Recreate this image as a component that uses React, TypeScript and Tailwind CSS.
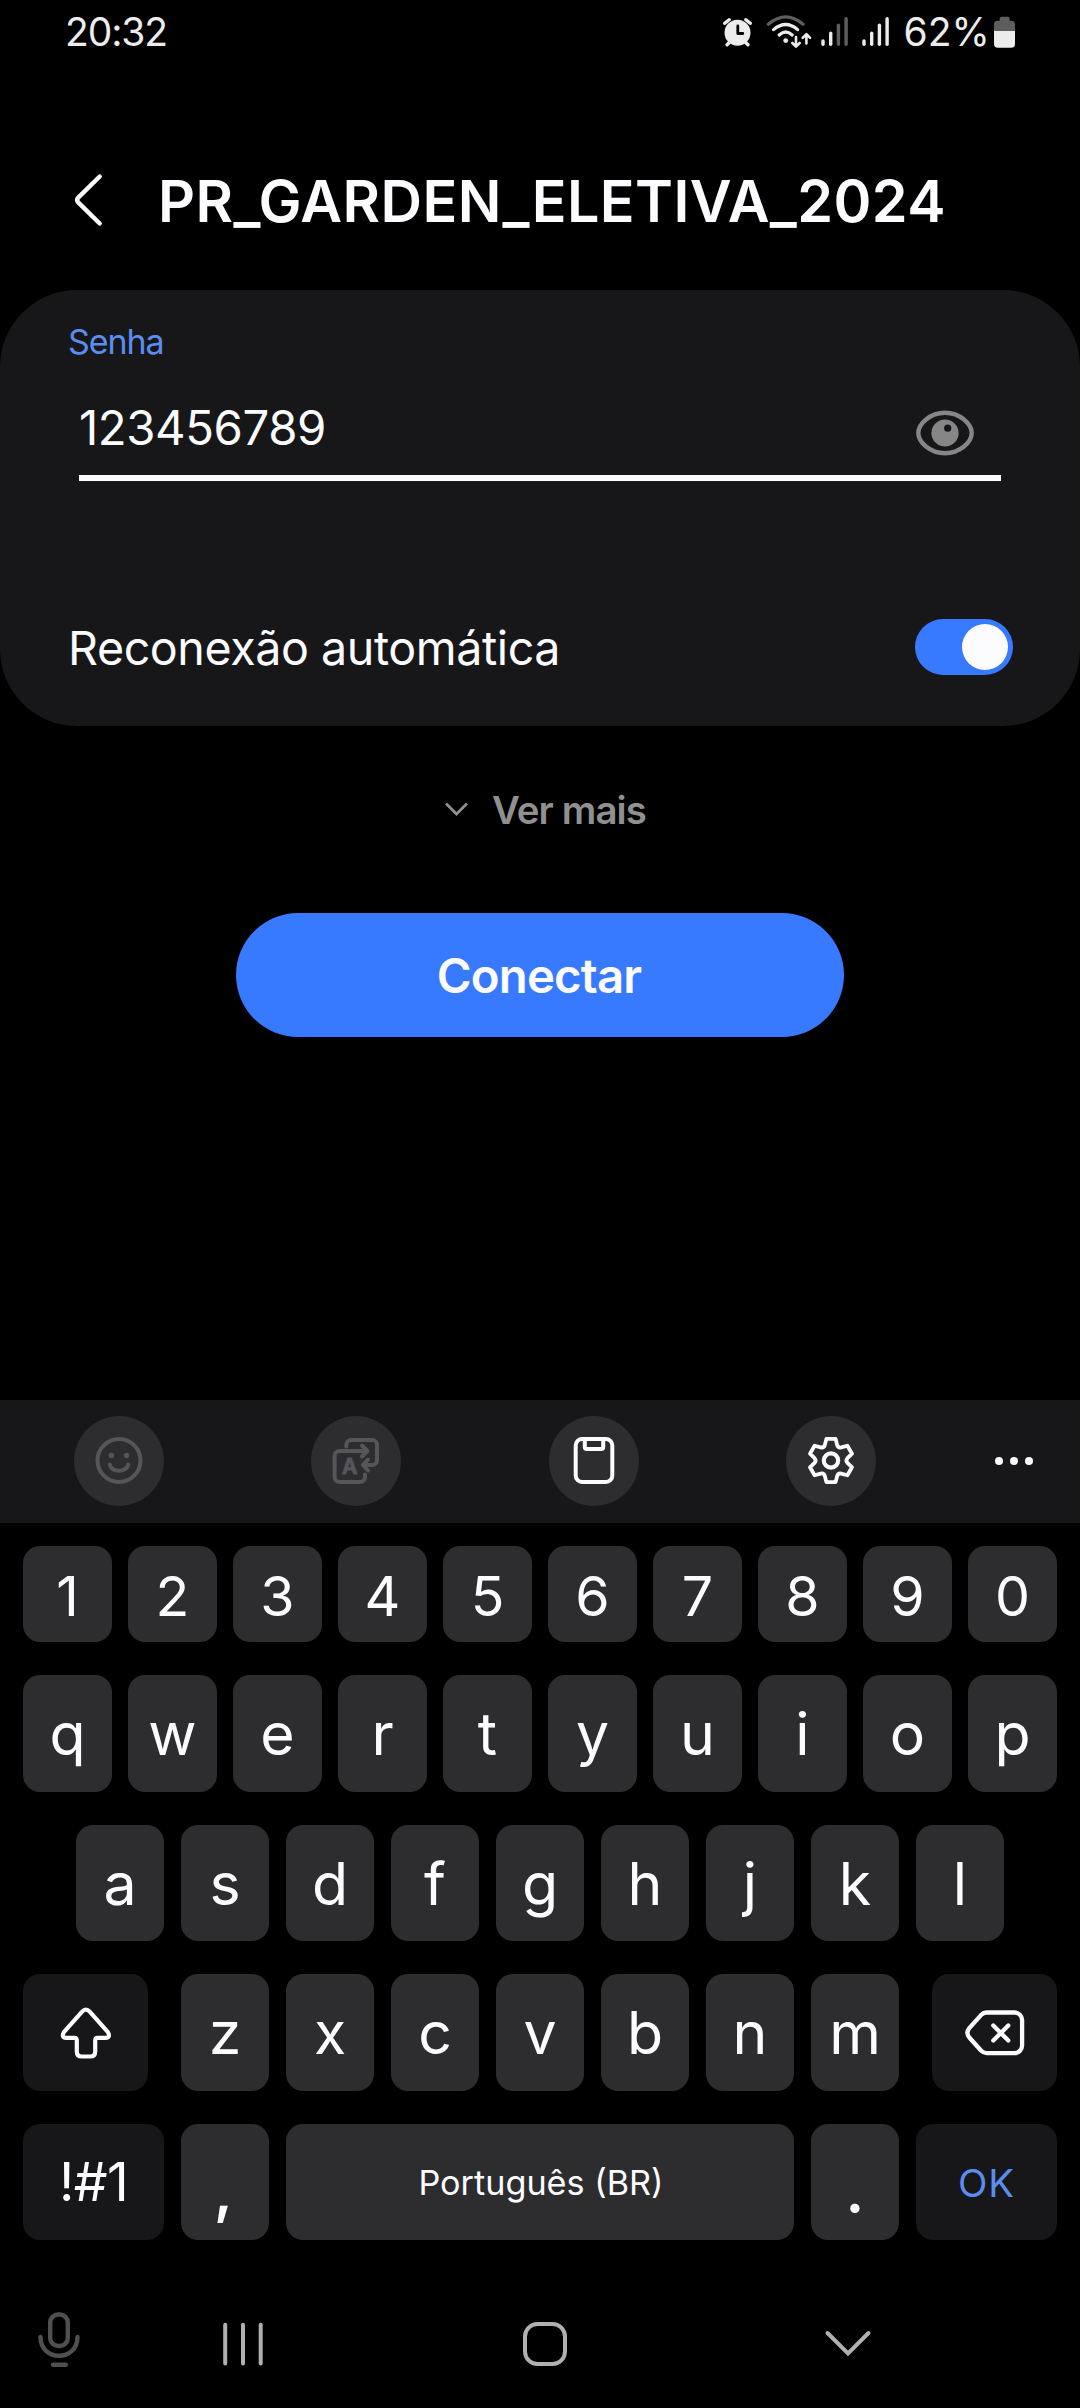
import type { ReactNode } from "react";

const digits = "1234567890".split("");
const topRow = "qwertyuiop".split("");
const homeRow = "asdfghjkl".split("");
const bottomRow = "zxcvbnm".split("");

/* Six-tooth gear outline centred on the origin. */
function gearPath() {
  const rot = (x: number, y: number, k: number) => {
    const a = (Math.PI / 3) * k;
    return `${(x * Math.cos(a) - y * Math.sin(a)).toFixed(2)} ${(x * Math.sin(a) + y * Math.cos(a)).toFixed(2)}`;
  };
  let d = `M${rot(-6.2, -15.4, 0)}`;
  for (let k = 0; k < 6; k++) {
    d += `L${rot(-4.6, -21.6, k)}L${rot(4.6, -21.6, k)}L${rot(6.2, -15.4, k)}Q${rot(7.2, -12.4, k)} ${rot(-6.2, -15.4, k + 1)}`;
  }
  return d + "Z";
}

function AlarmIcon() {
  return (
    <svg className="h-8 w-[30px]" viewBox="723 17 30 32" fill="none">
      <circle cx="738.5" cy="33.7" r="13" fill="#ececec" />
      <path d="M725.8 24.3l4.3-3.6M751.2 24.3l-4.3-3.6M730.3 43.5l-2.2 2.2M746.7 43.5l2.2 2.2" stroke="#ececec" strokeWidth="3.4" strokeLinecap="round" />
      <path d="M738.8 27v7.5h5" stroke="#000" strokeWidth="2.8" strokeLinecap="round" strokeLinejoin="round" />
    </svg>
  );
}

function WifiIcon() {
  return (
    <svg className="ml-[14px] h-9 w-[46px]" viewBox="767 15 46 36" fill="none" strokeLinecap="round" strokeLinejoin="round">
      <path d="M769.3 25.2Q786.7 10.6 804 25.2" stroke="#5e5e5e" strokeWidth="3.2" />
      <g stroke="#ececec" strokeWidth="3.2">
        <path d="M774.6 30.6Q786.7 20.4 798.6 30.6M780.2 36Q786.7 30 793.2 36" />
        <path d="M797 38v9.3M793.3 44l3.7 3.7 3.7-3.7M807.4 44.5V35.3M803.7 38.9l3.7-3.7 3.7 3.7" strokeWidth="2.6" />
      </g>
      <circle cx="786.7" cy="41.6" r="2.4" fill="#ececec" />
    </svg>
  );
}

function SignalIcon({ level }: { level: number }) {
  const tops = [42, 34.3, 26.3, 19.8];
  return (
    <svg className="h-8 w-[28px]" viewBox="822 17 28 32" strokeWidth="3.4" strokeLinecap="round">
      {tops.map((t, i) => (
        <path key={t} d={`M${824 + i * 7.7} ${t}V45.3`} stroke={i < level ? "#ececec" : "#5e5e5e"} />
      ))}
    </svg>
  );
}

function BatteryIcon() {
  return (
    <svg className="ml-[4px] h-8 w-[22px]" viewBox="994 16 22 32">
      <path d="M999.7 20.8v-2a2 2 0 0 1 2-2h6a2 2 0 0 1 2 2v2h1.8a3.5 3.5 0 0 1 3.5 3.5V31.5H994V24.3a3.5 3.5 0 0 1 3.5-3.5z" fill="#5e5e5e" />
      <path d="M994 31h21v13a3.8 3.8 0 0 1-3.8 3.8h-13.4A3.8 3.8 0 0 1 994 44z" fill="#ececec" />
    </svg>
  );
}

function StatusBar() {
  return (
    <div className="flex h-16 items-center pl-[65px] text-[39px] text-[#ececec]">
      <span className="tracking-[-1.12px]">20:32</span>
      <div className="ml-auto flex items-center pr-16">
        <AlarmIcon />
        <WifiIcon />
        <div className="ml-[9px] flex gap-[13px]">
          <SignalIcon level={2} />
          <SignalIcon level={4} />
        </div>
        <span className="ml-[13px] tracking-[0.1px]">62%</span>
        <BatteryIcon />
      </div>
    </div>
  );
}

function NetworkForm() {
  return (
    <section className="rounded-[77px] bg-[#17171a] pt-8 pr-[67px] pb-[51px] pl-[68px]">
      <div className="h-10 text-[34px] leading-10 tracking-[-1.1px] text-[#5b8def]">Senha</div>
      <div className="mt-[31px] mr-3 ml-[11px] border-b-[6px] border-[#fcfcff] pb-3">
        <div className="flex h-[70px] items-center justify-between pr-[26px]">
          <span className="text-[47.3px] tracking-[-0.4px]">123456789</span>
          <svg className="mt-[10px] h-12 w-[60px]" viewBox="915 409 60 48">
            <path d="M918.3 433C918.3 424 930 412.7 945 412.7S971.7 424 971.7 433 960 453.2 945 453.2 918.3 442 918.3 433Z" fill="none" stroke="#868686" strokeWidth="4.4" />
            <circle cx="945" cy="433" r="13.6" fill="#868686" />
            <circle cx="947.7" cy="428.2" r="3.6" fill="#17171a" />
          </svg>
        </div>
      </div>
      <div className="mt-[138px] flex h-14 items-center justify-between">
        <span className="pt-[3px] text-[46.6px] leading-none tracking-[-0.42px]">Reconexão automática</span>
        <div className="flex h-14 w-[98px] items-center justify-end rounded-full bg-[#387aff] pr-[5px]">
          <div className="size-[46px] rounded-full bg-[#fcfcff]" />
        </div>
      </div>
    </section>
  );
}

function ToolButton({ children }: { children: ReactNode }) {
  return <div className="flex size-[90px] items-center justify-center rounded-full bg-[#2d2d2f]">{children}</div>;
}

function Toolbar() {
  return (
    <div className="flex h-[123px] items-center bg-[#17171a] pb-px pl-[74px]">
      <div className="flex w-[802px] justify-between">
        <ToolButton>
          <svg className="size-[50px]" viewBox="-25 -25 50 50" fill="none" stroke="#565658" strokeWidth="4" strokeLinecap="round">
            <circle cy="-0.5" r="21.5" />
            <path d="M-9.3 3.6C-6.5 11.8 6.5 11.8 9.3 3.6" />
            <circle cx="-7.6" cy="-5.5" r="2.7" fill="#565658" stroke="none" />
            <circle cx="7.6" cy="-5.5" r="2.7" fill="#565658" stroke="none" />
          </svg>
        </ToolButton>
        <ToolButton>
          <svg className="size-[50px]" viewBox="331 1436 50 50" fill="none" stroke="#565658" strokeWidth="4" strokeLinecap="round" strokeLinejoin="round">
            <path d="M346.3 1446.5V1445a5 5 0 0 1 5-5H372a5 5 0 0 1 5 5V1460a5 5 0 0 1-5 5H363M368 1459.5L362.8 1465 368 1470.5" />
            <path d="M367 1451H339.6a5 5 0 0 0-5 5V1477a5 5 0 0 0 5 5H360a5 5 0 0 0 5-5V1474.5M362 1445.5L367.4 1451 362 1456.5" />
            <text x="349.6" y="1474" textAnchor="middle" fontSize="21" fontWeight="600" fill="#565658" strokeWidth="1">A</text>
          </svg>
        </ToolButton>
        <ToolButton>
          <svg className="size-[50px]" viewBox="-25 -25 50 50" fill="none" stroke="#fcfcff" strokeWidth="4" strokeLinejoin="round">
            <rect x="-18.3" y="-22" width="36.6" height="43" rx="6.5" />
            <path d="M-9.2-22V-14a2 2 0 0 0 2 2H7.2a2 2 0 0 0 2-2V-22" />
          </svg>
        </ToolButton>
        <ToolButton>
          <svg className="size-[50px]" viewBox="-25 -24.5 50 50" fill="none" stroke="#fcfcff" strokeWidth="3.8" strokeLinejoin="round">
            <path d={gearPath()} />
            <circle r="7.2" strokeWidth="4.2" />
          </svg>
        </ToolButton>
      </div>
      <div className="ml-[119px] flex gap-[7px]">
        <div className="size-2 rounded-full bg-[#fcfcff]" />
        <div className="size-2 rounded-full bg-[#fcfcff]" />
        <div className="size-2 rounded-full bg-[#fcfcff]" />
      </div>
    </div>
  );
}

function Key({ className = "w-[88px]", children }: { className?: string; children: ReactNode }) {
  return <div className={`flex h-full items-center justify-center rounded-[17px] bg-[#2d2d2f] ${className}`}>{children}</div>;
}

function DarkKey({ className, children }: { className: string; children: ReactNode }) {
  return <div className={`flex h-full items-center justify-center rounded-[17px] bg-[#17171a] ${className}`}>{children}</div>;
}

function Keyboard() {
  return (
    <div className="flex flex-col gap-[33px] pt-[23px] pr-[23px] pl-[23px] text-[59px] leading-none">
      <div className="flex h-24 justify-between text-[55.5px]">
        {digits.map((k) => (
          <Key key={k} className="w-[89px] pt-[4px]">{k}</Key>
        ))}
      </div>
      <div className="flex h-[117px] justify-between">
        {topRow.map((k) => (
          <Key key={k} className="w-[89px]">{k}</Key>
        ))}
      </div>
      <div className="flex h-[116px] justify-between px-[53px]">
        {homeRow.map((k) => (
          <Key key={k}>{k}</Key>
        ))}
      </div>
      <div className="flex h-[117px] justify-between">
        <DarkKey className="w-[125px]">
          <svg className="size-[54px]" viewBox="58.5 2005.5 54 54" fill="none" stroke="#fcfcff" strokeWidth="4.2" strokeLinejoin="round">
            <path d="M81.6 2011.2Q85.4 2007 89.2 2011.2L107.2 2031.3Q110.5 2037.2 105 2037.3H97Q94.7 2037.3 94.7 2040V2051Q94.7 2056 89.7 2056H81.3Q76.3 2056 76.3 2051V2040Q76.3 2037.3 74 2037.3H65.8Q60.3 2037.2 63.6 2031.3Z" />
          </svg>
        </DarkKey>
        <div className="flex w-[718px] justify-between">
          {bottomRow.map((k) => (
            <Key key={k}>{k}</Key>
          ))}
        </div>
        <DarkKey className="w-[125px]">
          <svg className="h-[50px] w-[64px]" viewBox="962.5 2007.5 64 50" fill="none" stroke="#fcfcff" strokeWidth="4.3" strokeLinecap="round" strokeLinejoin="round">
            <path d="M986 2012H1014a7.6 7.6 0 0 1 7.6 7.6V2045a7.6 7.6 0 0 1-7.6 7.6H986Q983 2052.6 980.5 2050L968.8 2037Q965 2032.3 968.8 2027.6L980.5 2014.6Q983 2012 986 2012Z" />
            <path d="M992.8 2025l15 15M1007.8 2025l-15 15" />
          </svg>
        </DarkKey>
      </div>
      <div className="flex h-[116px] justify-between">
        <DarkKey className="w-[141px] text-[53.4px] tracking-[-0.6px]">!#1</DarkKey>
        <Key className="w-[88px] pt-[17px] pr-[3px] font-semibold">,</Key>
        <Key className="w-[508px] pt-[2px] pl-[2px] text-[34.2px]">Português (BR)</Key>
        <Key className="w-[88px] pt-[17px] font-semibold">.</Key>
        <DarkKey className="w-[141px] pt-[2px] text-[38.4px] tracking-[1px] text-[#5b8def]">OK</DarkKey>
      </div>
    </div>
  );
}

function NavBar() {
  return (
    <div className="mt-[62px] flex h-[84px] items-center pl-[35px]">
      <svg className="mb-[8px] h-[66px] w-12" viewBox="35 2307 48 66" fill="none" stroke="#505050" strokeWidth="4.4" strokeLinecap="round">
        <rect x="50.2" y="2314.5" width="17.6" height="31.5" rx="8" />
        <path d="M40.5 2337C40.5 2362 77.5 2362 77.5 2337M53 2364.7H65.8" />
      </svg>
      <svg className="ml-[137px] h-12 w-[46px]" viewBox="220 2320 46 48" stroke="#b0b0b0" strokeWidth="4" strokeLinecap="round">
        <path d="M225.2 2324.7V2363.5M243 2324.7V2363.5M260.7 2324.7V2363.5" />
      </svg>
      <svg className="ml-[255px] h-12 w-12" viewBox="521 2320 48 48" fill="none" stroke="#b0b0b0" strokeWidth="4">
        <rect x="525" y="2324" width="40" height="40" rx="12.5" />
      </svg>
      <svg className="ml-[253px] h-12 w-[52px]" viewBox="822 2320 52 48" fill="none" stroke="#b0b0b0" strokeWidth="4" strokeLinecap="round">
        <path d="M827.5 2333L848 2353.5 868.5 2333" />
      </svg>
    </div>
  );
}

export default function App() {
  return (
    <div className="flex h-[2408px] w-[1080px] flex-col overflow-hidden bg-black font-['Inter',sans-serif] text-[#fcfcff]">
      <StatusBar />
      <header className="mt-12 flex h-[178px] items-center pl-[72px]">
        <svg className="mb-[2px] h-[56px] w-[34px] shrink-0" viewBox="72 172 34 56" fill="none" stroke="#fcfcff" strokeWidth="4.4" strokeLinecap="round" strokeLinejoin="round">
          <path d="M99.7 176.5L78.2 197.6Q76 200 78.2 202.4L99.7 223.5" />
        </svg>
        <h1 className="ml-[52px] text-[57.5px] font-semibold tracking-[0.4px] whitespace-nowrap">PR_GARDEN_ELETIVA_2024</h1>
      </header>
      <NetworkForm />
      <div className="mt-16 flex h-10 items-center pl-[443px] text-[#909090]">
        <svg className="mb-[2px] h-5 w-[27px]" viewBox="443 799 27 20" fill="none" stroke="#909090" strokeWidth="2.8">
          <path d="M446 803.5L456.5 814 467 803.5" />
        </svg>
        <span className="ml-[22px] text-[38.4px] leading-none font-semibold tracking-[-0.9px]">Ver mais</span>
      </div>
      <div className="mt-[83px] flex h-[124px] w-[608px] items-center justify-center self-center rounded-full bg-[#387aff] pt-0.5 pr-[2px] text-[47.3px] font-semibold tracking-[-0.8px]">
        Conectar
      </div>
      <div className="mt-[363px]">
        <Toolbar />
        <Keyboard />
        <NavBar />
      </div>
    </div>
  );
}
